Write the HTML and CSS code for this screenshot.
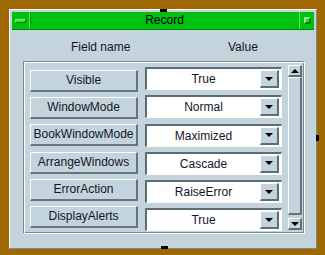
FILE: index.html
```html
<!DOCTYPE html>
<html lang="en">
<head>
  <meta charset="UTF-8" />
  <title>Record</title>
  <link rel="stylesheet" href="styles.css">
</head>
<body>
  <div class="window">
    <span class="handle handle-top"></span>
    <span class="handle handle-right"></span>
    <span class="handle handle-bottom"></span>

    <div class="titlebar">
      <div class="tb-btn tb-min"><span class="min-icon"></span></div>
      <div class="title">Record</div>
      <div class="tb-btn tb-max"><span class="max-icon"></span></div>
    </div>

    <div class="content">
      <div class="headers">
        <span class="h-field">Field name</span>
        <span class="h-value">Value</span>
      </div>

      <div class="panel">
        <div class="names">
          <div class="btn">Visible</div>
          <div class="btn">WindowMode</div>
          <div class="btn">BookWindowMode</div>
          <div class="btn">ArrangeWindows</div>
          <div class="btn">ErrorAction</div>
          <div class="btn">DisplayAlerts</div>
        </div>
        <div class="values">
          <div class="combo"><span class="field">True</span><span class="arrow"><i class="tri-down"></i></span></div>
          <div class="combo"><span class="field">Normal</span><span class="arrow"><i class="tri-down"></i></span></div>
          <div class="combo"><span class="field">Maximized</span><span class="arrow"><i class="tri-down"></i></span></div>
          <div class="combo"><span class="field">Cascade</span><span class="arrow"><i class="tri-down"></i></span></div>
          <div class="combo"><span class="field">RaiseError</span><span class="arrow"><i class="tri-down"></i></span></div>
          <div class="combo"><span class="field">True</span><span class="arrow"><i class="tri-down"></i></span></div>
        </div>
        <div class="scrollbar">
          <div class="sb-btn"><i class="tri-up"></i></div>
          <div class="thumb"></div>
          <div class="sb-btn"><i class="tri-down"></i></div>
        </div>
      </div>
    </div>
  </div>
</body>
</html>
```

FILE: styles.css
```css
body {
  margin: 0;
  background: #a06800;
  font-family: "Liberation Sans", Arial, sans-serif;
  font-size: 12px;
  color: #141428;
}

.window {
  position: relative;
  margin: 9px 0 0 9px;
  width: 308px; height: 240px;
  box-sizing: border-box;
  background: #c4d4dc;
  border: 1px solid; border-color: #fff #7a8a92 #7a8a92 #fff;
  padding: 2px;
}

.handle { position: absolute; background: #000; }
.handle-top { top: -1px; left: 150px; width: 7px; height: 3px; }
.handle-bottom { top: 236px; left: 151px; width: 7px; height: 3px; }
.handle-right { top: 125px; left: 306px; width: 3px; height: 6px; }

/* title bar */
.titlebar {
  display: flex; height: 17px;
  background: #00c010;
  border-bottom: 1px solid #008a00;
}
.tb-btn { display: flex; align-items: center; justify-content: center; }
.tb-min { width: 17px; border-right: 1px solid #50ec50; box-shadow: 1px 0 0 #009a00; }
.tb-max { width: 14px; border-left: 1px solid #50ec50; }
.min-icon {
  width: 9px; height: 2px; background: #40e040;
  border: 1px solid; border-color: #70f070 #007a00 #007a00 #70f070;
}
.max-icon {
  width: 3px; height: 3px; background: #30d830;
  border: 2px solid; border-color: #80f080 #007a00 #007a00 #80f080;
}
.title { flex: 1; text-align: center; line-height: 17px; color: #000; }

/* body */
.content { display: flex; flex-direction: column; }
.headers { display: flex; padding: 10px 0 0 59px; line-height: 14px; }
.h-field { width: 157px; }

.panel {
  display: flex; align-items: flex-start;
  margin: 7px 0 0 11px;
  width: 282px; height: 173px;
  box-sizing: border-box;
  border: 1px solid; border-color: #7a8a92 #fff #fff #7a8a92;
  box-shadow: inset 1px 1px 0 #fff, inset -1px -1px 0 #7a8a92;
}

.names { display: flex; flex-direction: column; gap: 5.2px; margin-left: 6px; padding-top: 8px; }
.btn {
  width: 108px; height: 22px; box-sizing: border-box;
  border-style: solid; border-width: 1px 2px 2px 1px;
  border-color: #fff #66747c #66747c #fff;
  text-align: center; line-height: 19px;
}

.values { display: flex; flex-direction: column; gap: 5.25px; margin-left: 7px; padding-top: 5px; }
.combo {
  display: flex; align-items: center;
  width: 137px; height: 23px; box-sizing: border-box;
  background: #fff;
  border-style: solid; border-width: 2px 1px 1px 2px;
  border-color: #5e6c74 #fff #fff #5e6c74;
  padding-right: 2px;
}
.field { flex: 1; text-align: center; line-height: 18px; }
.arrow {
  display: flex; align-items: center; justify-content: center;
  width: 19px; height: 18px; box-sizing: border-box;
  background: #c4d4dc;
  border-style: solid; border-width: 1px 2px 2px 1px;
  border-color: #fff #5e6c74 #5e6c74 #fff;
}
.tri-down {
  width: 0; height: 0;
  border-left: 4px solid transparent; border-right: 4px solid transparent;
  border-top: 4px solid #000;
}
.tri-up {
  width: 0; height: 0;
  border-left: 4px solid transparent; border-right: 4px solid transparent;
  border-bottom: 4px solid #000;
}

.scrollbar {
  display: flex; flex-direction: column;
  width: 14px; height: 165px;
  margin: 3px 0 0 6px;
}
.sb-btn {
  display: flex; align-items: center; justify-content: center;
  height: 12px; box-sizing: border-box;
  border-style: solid; border-width: 1px 2px 2px 1px;
  border-color: #fff #5e6c74 #5e6c74 #fff;
}
.thumb {
  flex: 1; margin: 0 0 3px;
  border-style: solid; border-width: 1px 2px 2px 1px;
  border-color: #fff #66747c #66747c #fff;
}
```
